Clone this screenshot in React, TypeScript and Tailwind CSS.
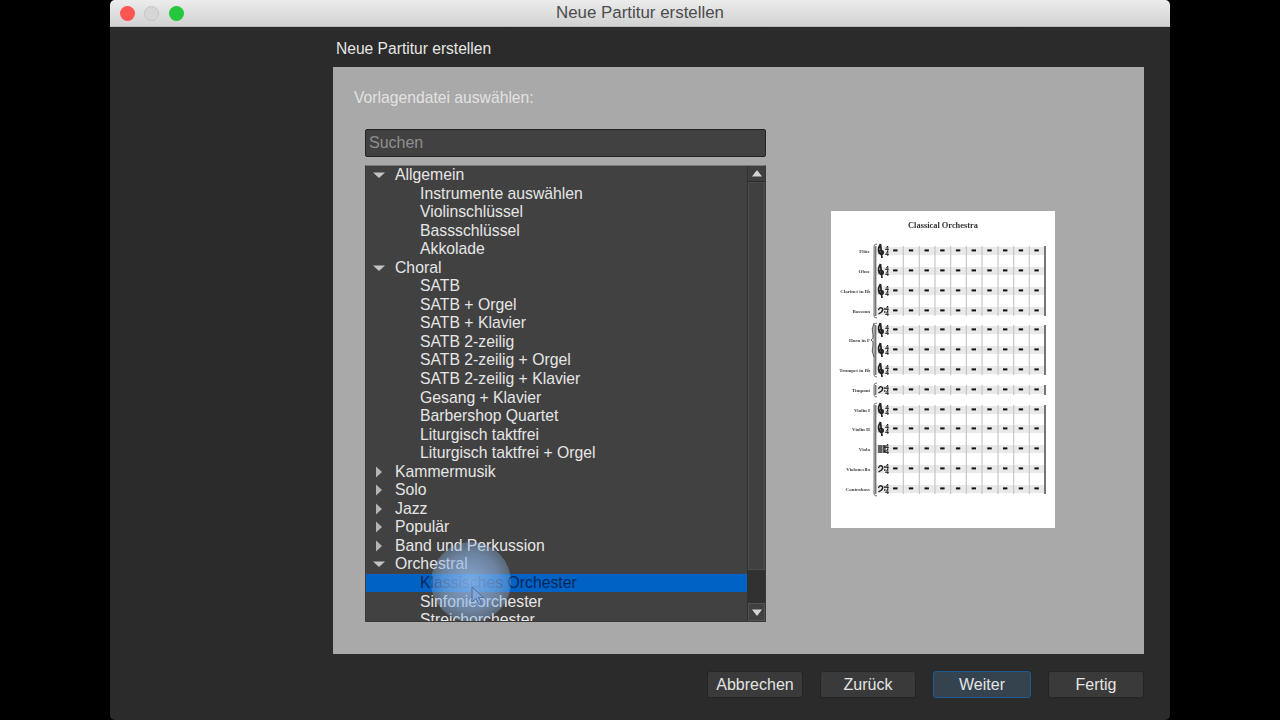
const tree: { label: string; open?: boolean; closed?: boolean; selected?: boolean }[] = [
  { label: 'Allgemein', open: true },
  { label: 'Instrumente auswählen' },
  { label: 'Violinschlüssel' },
  { label: 'Bassschlüssel' },
  { label: 'Akkolade' },
  { label: 'Choral', open: true },
  { label: 'SATB' },
  { label: 'SATB + Orgel' },
  { label: 'SATB + Klavier' },
  { label: 'SATB 2-zeilig' },
  { label: 'SATB 2-zeilig + Orgel' },
  { label: 'SATB 2-zeilig + Klavier' },
  { label: 'Gesang + Klavier' },
  { label: 'Barbershop Quartet' },
  { label: 'Liturgisch taktfrei' },
  { label: 'Liturgisch taktfrei + Orgel' },
  { label: 'Kammermusik', closed: true },
  { label: 'Solo', closed: true },
  { label: 'Jazz', closed: true },
  { label: 'Populär', closed: true },
  { label: 'Band und Perkussion', closed: true },
  { label: 'Orchestral', open: true },
  { label: 'Klassisches Orchester', selected: true },
  { label: 'Sinfonieorchester' },
  { label: 'Streichorchester' },
];

const staves = [
  { y: 40, name: 'Flöte', clef: 'g' },
  { y: 60, name: 'Oboe', clef: 'g' },
  { y: 80, name: 'Clarinet in B♭', clef: 'g' },
  { y: 100, name: 'Bassoon', clef: 'f' },
  { y: 119, name: '', clef: 'g' },
  { y: 139, name: '', clef: 'g' },
  { y: 159, name: 'Trumpet in B♭', clef: 'g' },
  { y: 179, name: 'Timpani', clef: 'f' },
  { y: 199, name: 'Violin I', clef: 'g' },
  { y: 218, name: 'Violin II', clef: 'g' },
  { y: 238, name: 'Viola', clef: 'c' },
  { y: 258, name: 'Violoncello', clef: 'f' },
  { y: 278, name: 'Contrabass', clef: 'f' },
];

const groups = [
  [35, 105],
  [114, 164],
  [174, 184],
  [194, 283],
];

const bars = [72.3, 88.3, 104, 119.7, 135.3, 151, 167, 182.7, 198.3];
const rests = [64.3, 80, 95.7, 111.4, 127.1, 142.8, 158.5, 174.2, 189.9, 205.6];

function Score() {
  return (
    <svg width="224" height="317" viewBox="0 0 224 317" className="bg-white">
      <g className="blur-[0.55px]">
        <text x="112" y="17" textAnchor="middle" fontSize="8.400" fontWeight="bold" fill="#333" fontFamily="Liberation Serif, serif">
          Classical Orchestra
        </text>
        <text x="39" y="131" textAnchor="end" fontSize="5" fontWeight="bold" fill="#444" fontFamily="Liberation Serif, serif">
          Horn in F
        </text>
        {staves.map((s) => (
          <g key={s.y}>
            <rect x="45" y={s.y - 4} width="169" height="8" fill="#e9e9e9" />
            <text x="39" y={s.y + 1.5} textAnchor="end" fontSize="5" fontWeight="bold" fill="#444" fontFamily="Liberation Serif, serif">
              {s.name}
            </text>
            {s.clef === 'g' && (
              <path d={`M49.500 ${s.y - 7} q-3 5 -1.500 8 q2 4 4 1.500 q1 -3 -2.500 -3 q-2.500 1 -1 3 M49.500 ${s.y - 7} l1.500 14`} fill="none" stroke="#222" strokeWidth="1.700" />
            )}
            {s.clef === 'f' && (
              <path d={`M47.500 ${s.y - 1} q1 -3 3 -2 q2.500 1 0 4 l-3 2 M53 ${s.y - 2} h1.500 M53 ${s.y + 1} h1.500`} fill="none" stroke="#222" strokeWidth="1.500" />
            )}
            {s.clef === 'c' && (
              <path d={`M48 ${s.y - 4} v8 M50 ${s.y - 4} v8 M51.500 ${s.y - 3} h2.500 v2 h-2.500 M51.500 ${s.y + 1} h2.500 v2 h-2.500`} fill="none" stroke="#222" strokeWidth="1.400" />
            )}
            <text x="56" y={s.y - 0.5} textAnchor="middle" fontSize="6.500" fontWeight="bold" fill="#111" fontFamily="Liberation Sans, sans-serif">4</text>
            <text x="56" y={s.y + 5} textAnchor="middle" fontSize="6.500" fontWeight="bold" fill="#111" fontFamily="Liberation Sans, sans-serif">4</text>
            {rests.map((x) => (
              <rect key={x} x={x - 2.2} y={s.y - 1.6} width="4.400" height="2" fill="#111" />
            ))}
          </g>
        ))}
        {groups.map(([a, b]) => (
          <g key={a}>
            {bars.map((x) => (
              <line key={x} x1={x} x2={x} y1={a} y2={b} stroke="#c2c2c2" strokeWidth="1.100" />
            ))}
            <line x1="44.500" x2="44.500" y1={a} y2={b} stroke="#777" strokeWidth="1.800" />
            <line x1="214" x2="214" y1={a} y2={b} stroke="#555" strokeWidth="1.600" />
            <path d={`M46 ${a - 2} q-3 0 -3 2 V${b} q0 2 3 2`} fill="none" stroke="#666" strokeWidth="0.900" />
          </g>
        ))}
        <path d="M43 112 q-3 6 -1 12 q1 4 -2 5 q3 1 2 5 q-2 6 1 12" fill="none" stroke="#555" strokeWidth="1" />
      </g>
    </svg>
  );
}

function Arrow({ open }: { open: boolean }) {
  return (
    <svg width="12" height="12" viewBox="0 0 12 12" className="shrink-0">
      {open ? <path d="M0 3.5h12L6 9z" fill="#c4c4c4" /> : <path d="M3 0.5v11L9 6z" fill="#b4b4b4" />}
    </svg>
  );
}

function TreeRow({ item }: { item: (typeof tree)[number] }) {
  const isParent = item.open || item.closed;
  return (
    <div
      className={
        'h-[18.55px] flex items-center shrink-0 leading-none ' +
        (item.selected ? 'bg-[#0062c4] text-[#06265a] ' : 'text-[#e6e6e6] ')
      }
    >
      {isParent ? (
        <>
          <span className="w-[7px]" />
          <Arrow open={!!item.open} />
          <span className="ml-[10px]">{item.label}</span>
        </>
      ) : (
        <span className="ml-[54px]">{item.label}</span>
      )}
    </div>
  );
}

function Button({ label, focus }: { label: string; focus?: boolean }) {
  return (
    <button
      className={
        'h-[27px] rounded-[3px] border text-[16px] text-[#e4e4e4] ' +
        (focus ? 'w-[98px] bg-[#35434f] border-[#1d5a96]' : 'w-[96px] bg-[#3a3a3a] border-[#252525]')
      }
    >
      {label}
    </button>
  );
}

export default function App() {
  return (
    <div className="w-[1280px] h-[720px] bg-black flex justify-center overflow-hidden font-['Liberation_Sans',sans-serif]">
      <div className="w-[1060px] h-full flex flex-col bg-[#2b2b2b] rounded-t-[5px] rounded-b-[5px] overflow-hidden">
        {/* Title bar */}
        <div className="relative h-[27px] shrink-0 flex items-center justify-center bg-gradient-to-b from-[#ececec] to-[#d2d2d2] border-b border-[#b8b8b8]">
          <div className="absolute left-[9.5px] top-[6px] flex gap-[9.5px]">
            <span className="w-[15px] h-[15px] rounded-full bg-[#fc5652]" />
            <span className="w-[15px] h-[15px] rounded-full bg-[#d6d6d6] border border-[#c4c4c4]" />
            <span className="w-[15px] h-[15px] rounded-full bg-[#27c63f]" />
          </div>
          <span className="text-[16.9px] text-[#4c4c4c]">Neue Partitur erstellen</span>
        </div>

        <div className="flex-1 flex flex-col pl-[223px] pr-[26px]">
          <div className="h-[40px] shrink-0 flex items-center pl-[3px] pt-[3px] text-[15.6px] text-[#e6e6e6]">
            Neue Partitur erstellen
          </div>

          {/* Template page */}
          <div className="h-[587px] shrink-0 bg-[#a9a9a9] pl-[21px] flex flex-col">
            <div className="h-[62px] shrink-0 flex items-center text-[15.7px] text-[#e2e2e2]">Vorlagendatei auswählen:</div>
            <div className="flex pl-[11px]">
              <div className="w-[401px] shrink-0 flex flex-col">
                <div className="h-[28px] flex items-center pl-[3px] bg-[#414141] border border-[#242424] rounded-[2px] text-[16px] text-[#8f8f8f]">
                  Suchen
                </div>
                <div className="relative mt-[8px] h-[457px] flex bg-[#414141] border border-[#3a3a3a] border-t-[#7a7a7a] overflow-hidden text-[15.75px]">
                  <div className="flex-1 flex flex-col overflow-hidden -mt-[0.4px]">
                    {tree.map((item) => (
                      <TreeRow key={item.label} item={item} />
                    ))}
                  </div>

                  {/* Scrollbar */}
                  <div className="w-[18px] shrink-0 flex flex-col bg-[#313131] border-l border-[#303030]">
                    <div className="h-[16px] flex items-center justify-center bg-[#3f3f3f] border-b border-[#2a2a2a]">
                      <svg width="10" height="7" viewBox="0 0 10 7"><path d="M0 6.5h10L5 0z" fill="#d4d4d4" /></svg>
                    </div>
                    <div className="h-[388px] bg-[#404040] border border-[#4c4c4c]" />
                    <div className="flex-1" />
                    <div className="h-[18px] flex items-center justify-center bg-[#414141] border border-[#525252]">
                      <svg width="10" height="7" viewBox="0 0 10 7"><path d="M0 0.5h10L5 7z" fill="#d4d4d4" /></svg>
                    </div>
                  </div>

                  {/* Mouse highlight */}
                  <div className="absolute left-[65px] top-[376px] w-[80px] h-[80px] rounded-full bg-[radial-gradient(circle,rgba(150,190,240,0.8)_0%,rgba(140,180,230,0.58)_50%,rgba(140,175,220,0)_100%)]" />
                  <svg width="14" height="20" viewBox="0 0 14 20" className="absolute left-[105px] top-[420px]">
                    <path d="M1 1v15l4-3.5 3 6 2.500-1.200-3-5.800h5z" fill="#7ea6d8" stroke="#4d6f9e" strokeWidth="1" />
                  </svg>
                </div>
              </div>
              <div className="ml-[65px] mt-[82px]">
                <Score />
              </div>
            </div>
          </div>

          {/* Buttons */}
          <div className="pt-[17px] flex justify-end gap-[17px]">
            <Button label="Abbrechen" />
            <Button label="Zurück" />
            <Button label="Weiter" focus />
            <Button label="Fertig" />
          </div>
        </div>
      </div>
    </div>
  );
}
